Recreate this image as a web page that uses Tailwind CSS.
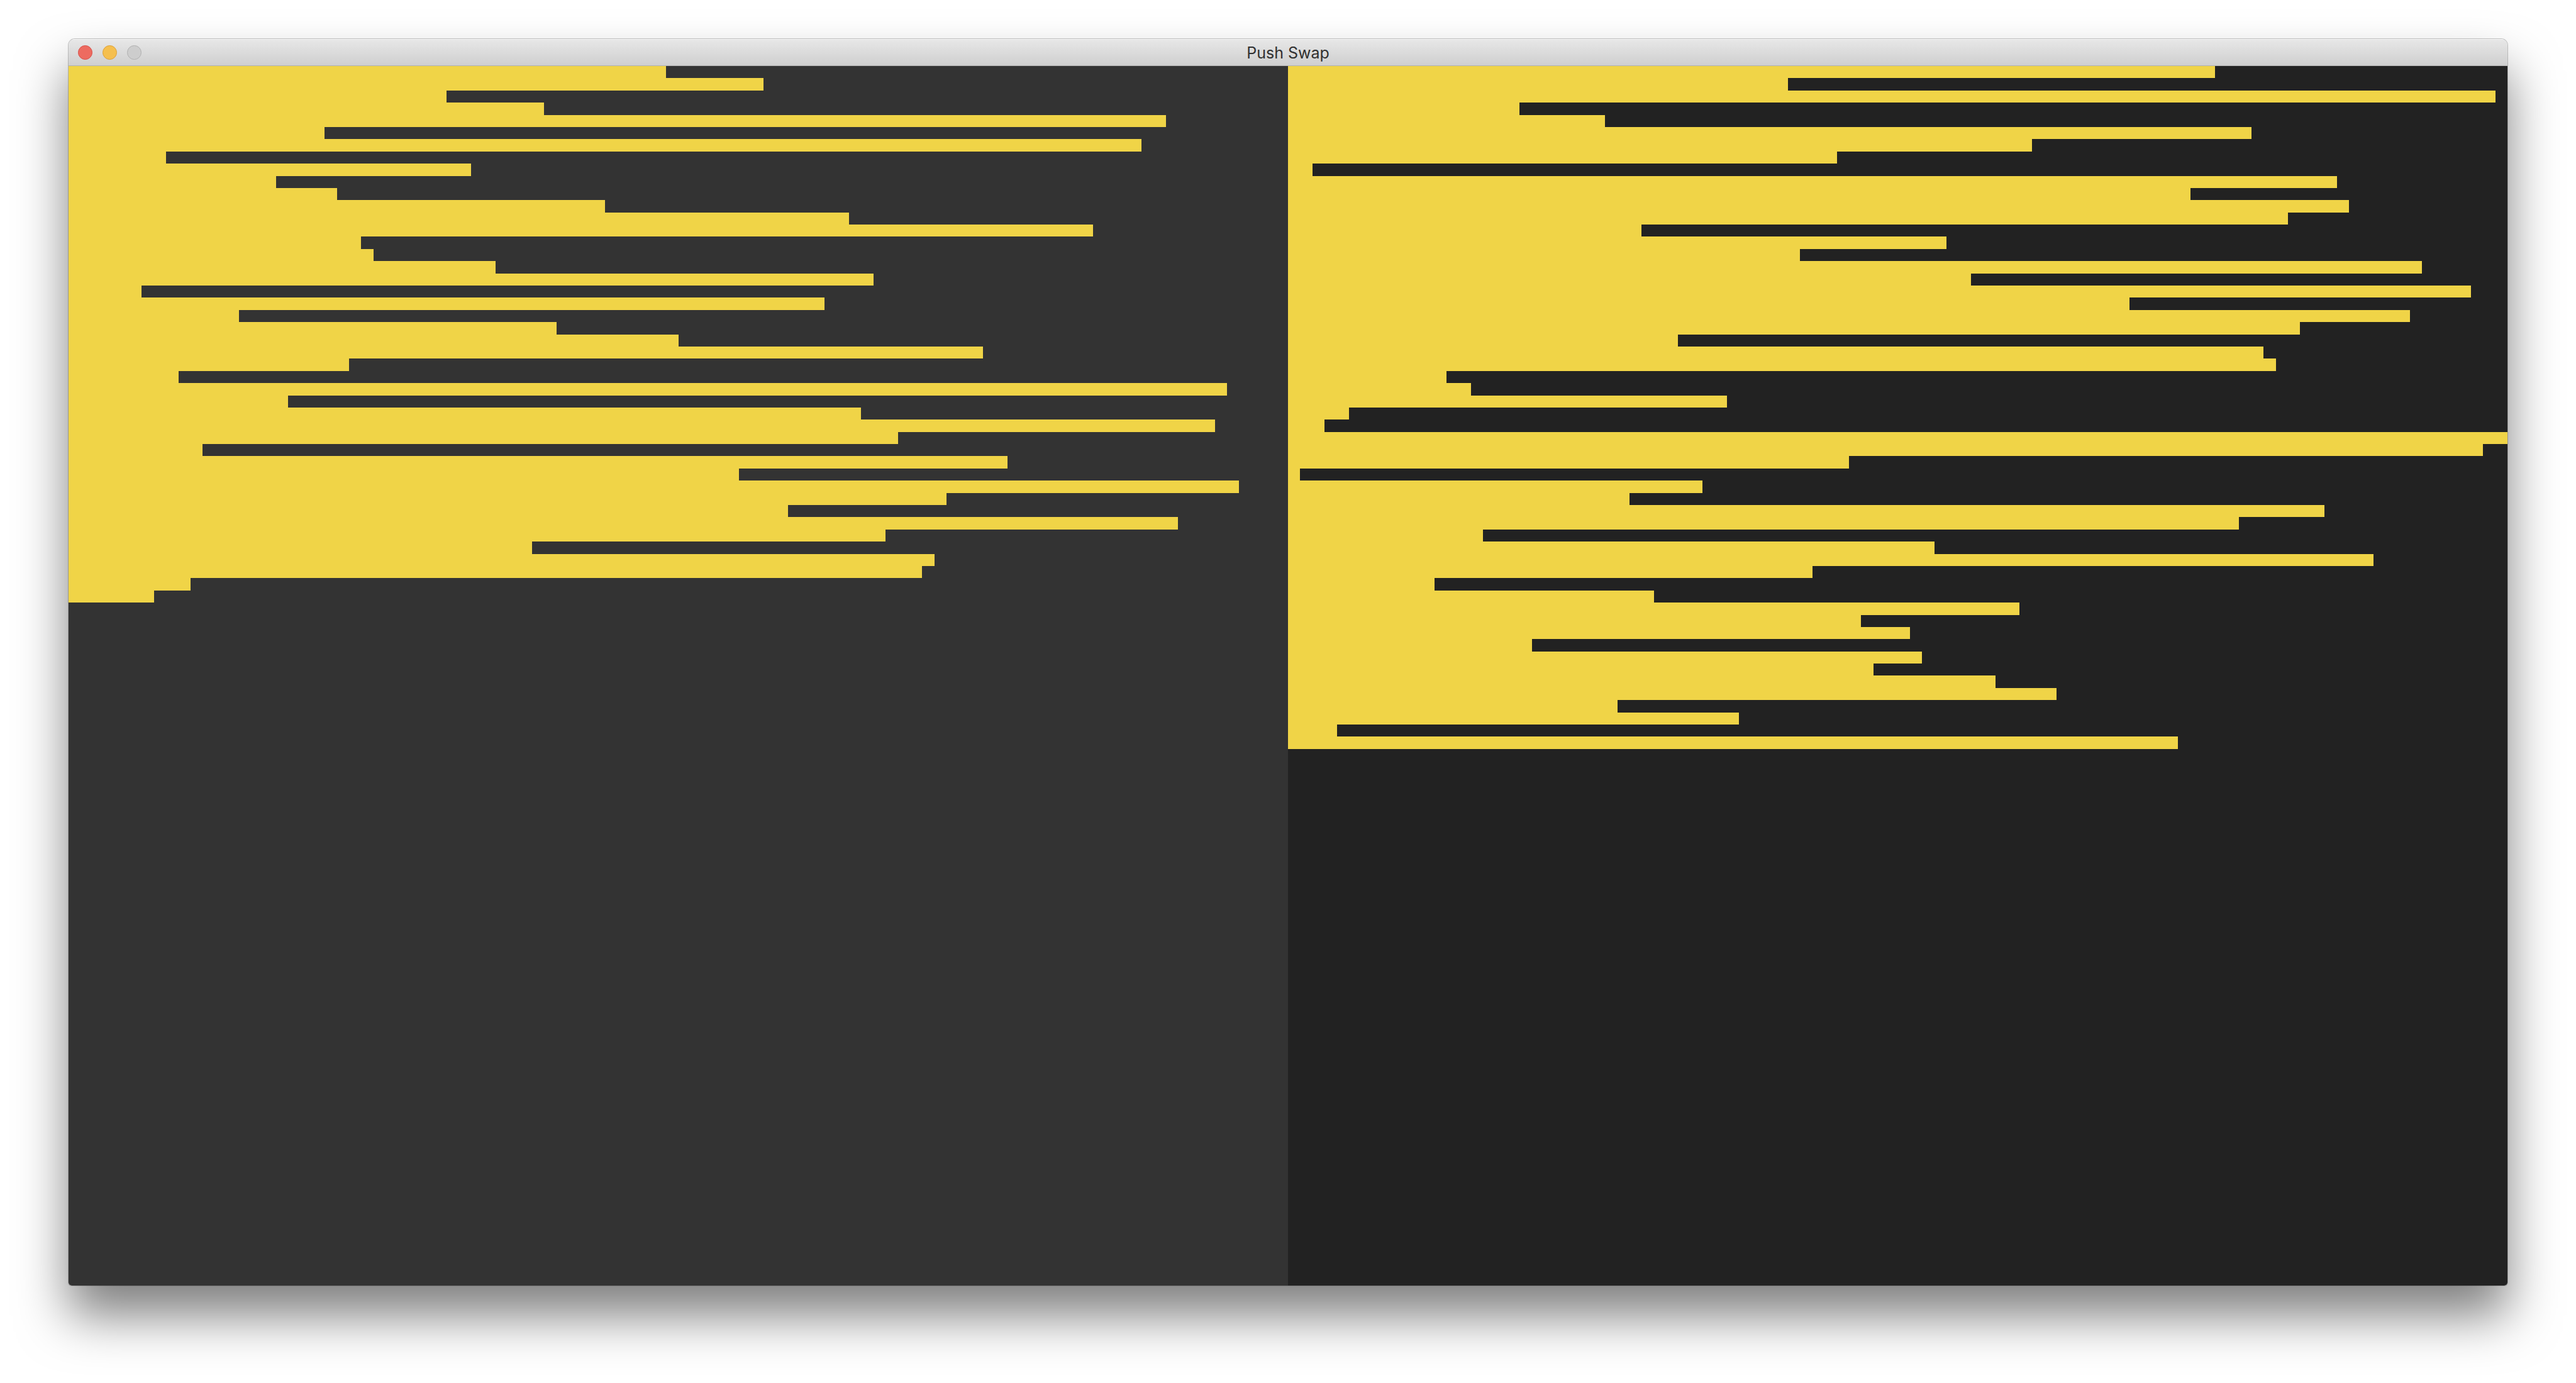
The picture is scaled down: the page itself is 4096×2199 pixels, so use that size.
<!DOCTYPE html>
<html lang="en">
<head>
<meta charset="utf-8">
<title>Push Swap</title>
<script src="https://cdn.jsdelivr.net/npm/@tailwindcss/browser@4"></script>
</head>
<body class="min-h-screen overflow-x-hidden bg-white px-[109px] pt-[62px]">
<main class="overflow-hidden rounded-t-[10px] rounded-b-[5px] shadow-[0_0_0_1px_rgba(0,0,0,0.22),0_48px_80px_rgba(0,0,0,0.5)]">
  <header class="grid h-[43px] grid-cols-[1fr_auto_1fr] items-center border-t border-b border-t-[#f5f5f5] border-b-[#b1b1b1] bg-linear-to-b from-[#e7e7e7] to-[#cfcfcf] px-[15px]">
    <div class="flex gap-4">
      <button type="button" aria-label="Close" class="size-[23px] rounded-full border border-[#d6504a] bg-[#ed6b60]"></button>
      <button type="button" aria-label="Minimize" class="size-[23px] rounded-full border border-[#dba03b] bg-[#f5bf4f]"></button>
      <button type="button" aria-label="Zoom" disabled class="size-[23px] rounded-full border border-[#b0b0b0] bg-[#cdcdcd]"></button>
    </div>
    <h1 class="font-['Inter',sans-serif] text-[25px] leading-8 text-[#303030]">Push Swap</h1>
  </header>
  <div class="grid grid-cols-2">
    <section id="stack-a" aria-label="Stack A" class="grid aspect-square grid-rows-[repeat(100,minmax(0,1fr))] bg-[#333333]"></section>
    <section id="stack-b" aria-label="Stack B" class="grid aspect-square grid-rows-[repeat(100,minmax(0,1fr))] bg-[#222222]"></section>
  </div>
</main>
<script>
  const stacks = {
    'stack-a': [49, 57, 31, 39, 90, 21, 88, 8, 33, 17, 22, 44, 64, 84, 24, 25, 35, 66, 6, 62, 14, 40, 50, 75, 23, 9, 95, 18, 65, 94, 68, 11, 77, 55, 96, 72, 59, 91, 67, 38, 71, 70, 10, 7],
    'stack-b': [76, 41, 99, 19, 26, 79, 61, 45, 2, 86, 74, 87, 82, 29, 54, 42, 93, 56, 97, 69, 92, 83, 32, 80, 81, 13, 15, 36, 5, 3, 100, 98, 46, 1, 34, 28, 85, 78, 16, 53, 89, 43, 12, 30, 60, 47, 51, 20, 52, 48, 58, 63, 27, 37, 4, 73]
  };
  // One bar per number, its width a percentage of the largest value (100).
  for (const [id, values] of Object.entries(stacks)) {
    const stack = document.getElementById(id);
    for (const value of values) {
      const bar = document.createElement('div');
      bar.className = 'bg-[#f0d447]';
      bar.style.width = value + '%';
      stack.append(bar);
    }
  }
</script>
</body>
</html>
